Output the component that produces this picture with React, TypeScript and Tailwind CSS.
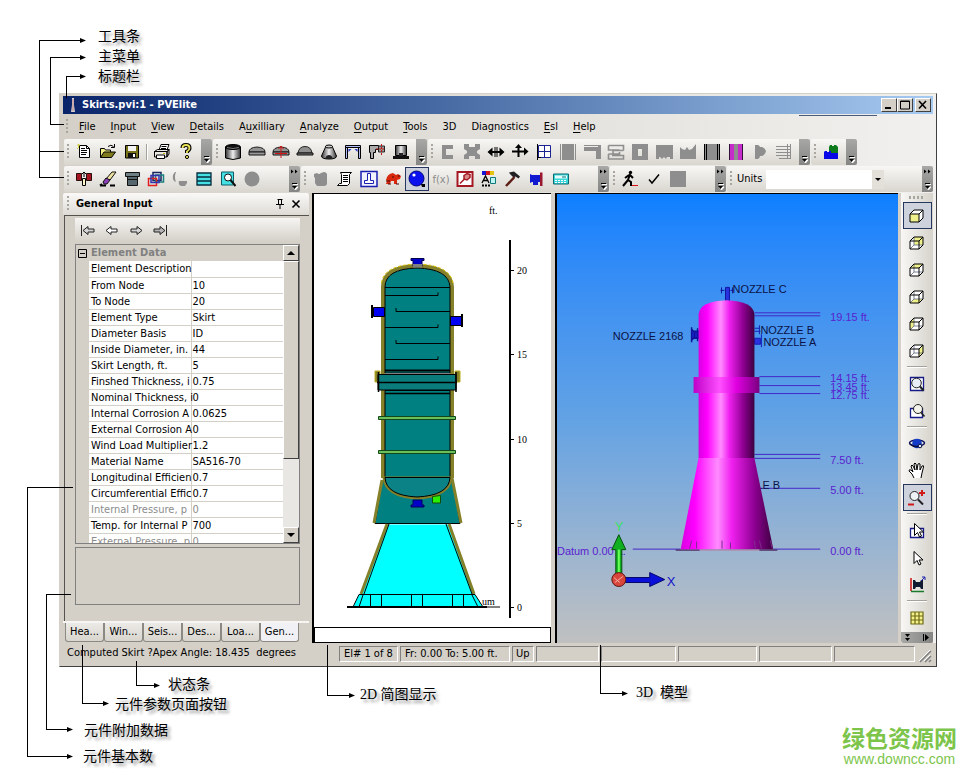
import type { ReactNode } from "react";
import { clsx } from "clsx";

interface Tool {
  name: string;
  art: ReactNode;
  active?: boolean;
}

const GREY = "#8e8e8e";

/* ---------- Toolbar icons, all drawn on a 20 x 20 grid ---------- */

const fileTools: Tool[] = [
  {
    name: "New",
    art: (
      <>
        <path d="M5.500 3.500h7l3 3v9h-10z" fill="#fff" stroke="#000" />
        <path d="M12.500 3.500v3h3M7 6.500h4M7 8.500h6M7 10.500h6M7 12.500h5" fill="none" stroke="#000" />
        <path d="M3 3h3M4.500 2v4M3 7l2-2" stroke="#d8d44a" fill="none" />
      </>
    ),
  },
  {
    name: "Open",
    art: (
      <>
        <path d="M2.500 15.500v-9h4l1 1.500h5v3" fill="#f3f08a" stroke="#000" />
        <path d="M2.500 15.500l3.500-5.500h11.500l-4 5.500z" fill="#7f7a1c" stroke="#000" />
        <path d="M10 4.500q3-2.500 5.500 0M16.500 2v3.500h-3.500" fill="none" stroke="#000" />
      </>
    ),
  },
  {
    name: "Save",
    art: (
      <>
        <path d="M3.500 3.500h13v12.500h-13z" fill="#77741c" stroke="#000" />
        <path d="M6 4h8v5H6z" fill="#f4f4f4" />
        <path d="M6 11h8v5H6z" fill="#111" />
        <path d="M11 12h2v3h-2z" fill="#fff" />
      </>
    ),
  },
];

const printTools: Tool[] = [
  {
    name: "Print",
    art: (
      <>
        <path d="M7 8l2-5.500h8l-2 5.500z" fill="#fff" stroke="#000" />
        <path d="M9.500 4.500h5M9 6.500h5" stroke="#000" />
        <path d="M2.500 9.500l3-2h11.500l-1.500 2zM2.500 9.500h12.500v5.500h-12.500zM15 9.500l2-2v4.500l-2 3z" fill="#e9e7e2" stroke="#000" />
        <path d="M4.500 13h8v3.500h-8z" fill="#fff" stroke="#000" />
        <path d="M11 11.500h2" stroke="#c9b800" />
      </>
    ),
  },
  {
    name: "Help",
    art: (
      <>
        <path d="M6.500 6q0-3 3.500-3t3.500 3q0 2-2.500 3.500v1.500" fill="none" stroke="#000" strokeWidth="4" />
        <path d="M6.500 6q0-3 3.500-3t3.500 3q0 2-2.500 3.500v1.500" fill="none" stroke="#e9e35a" strokeWidth="1.800" />
        <circle cx="11" cy="15" r="1.600" fill="#e9e35a" stroke="#000" />
      </>
    ),
  },
];

const elementTools: Tool[] = [
  {
    name: "Cylinder",
    art: (
      <>
        <path d="M2.500 5v11q7.500 3 15 0V5" fill="url(#steel)" stroke="#000" />
        <ellipse cx="10" cy="5" rx="7.500" ry="2.500" fill="#111" stroke="#000" />
        <path d="M4 5.500q6 2 12 0" stroke="#777" fill="none" />
      </>
    ),
  },
  {
    name: "Elliptical head",
    art: (
      <>
        <path d="M2 10q0-4.500 8-5 8 .500 8 5z" fill="#929292" stroke="#222" />
        <path d="M2 10h16v3H2z" fill="#9a9a9a" stroke="#111" />
      </>
    ),
  },
  {
    name: "Torispherical head",
    art: (
      <>
        <path d="M2 10q0-4.500 8-5 8 .500 8 5z" fill="#929292" stroke="#222" />
        <path d="M2 10h16v3H2z" fill="#9a9a9a" stroke="#111" />
        <path d="M10 4v12M7.500 7L10 4l2.500 3M4 11.500h12" fill="none" stroke="#d21414" />
      </>
    ),
  },
  {
    name: "Spherical head",
    art: (
      <>
        <path d="M3 11q1-6.500 7-6.500t7 6.500z" fill="#8f8f8f" stroke="#222" />
        <path d="M2 11h16v2H2z" fill="#777" stroke="#111" />
      </>
    ),
  },
  {
    name: "Cone",
    art: (
      <>
        <path d="M7 4L2.500 14q0 3 7.500 3t7.500-3L13 4z" fill="url(#steel)" stroke="#000" />
        <ellipse cx="10" cy="4.500" rx="3.500" ry="1.500" fill="#ccc" stroke="#000" />
        <path d="M6 17q1-4 4-4t4 4z" fill="#222" />
      </>
    ),
  },
  {
    name: "Welded flat head",
    art: (
      <>
        <path d="M2.500 3.500h15v2h-15zM2.500 5.500h2v11h-2zM15.500 5.500h2v11h-2z" fill="#aebcf5" stroke="#000" />
        <path d="M5.500 10V7h3zM14.500 10V7h-3z" fill="#2635c7" />
      </>
    ),
  },
  {
    name: "Body flange",
    art: (
      <>
        <path d="M2.500 3.500h9v4h-3v3h-2v6h-3v-6h-1z" fill="#aaa" stroke="#000" />
        <path d="M11.500 4h6v6h-6z" fill="#999" stroke="#222" />
        <path d="M9 7h9M14.500 2v12" stroke="#c21515" strokeDasharray="2 1" />
      </>
    ),
  },
  {
    name: "Skirt",
    art: (
      <>
        <path d="M4.500 3.500h11v10h-11z" fill="url(#steel)" stroke="#000" />
        <path d="M2 14h16v3H2z" fill="#111" />
        <path d="M8 11h4v3H8z" fill="#222" />
      </>
    ),
  },
];

const detailTools: Tool[] = [
  { name: "Ring", art: <path d="M4 3h11v4H8v6h7v4H4z" fill={GREY} /> },
  { name: "Nozzle", art: <path d="M2 2h5v3h6V2h5v5l-3 2v2l3 2v4h-5v-3H7v3H2v-4l3-2V9L2 7z" fill={GREY} /> },
  { name: "Width", art: <path d="M1.500 10l5-4.500v3.500h2V5h1v4h1V5h1v4h2V5.500l5 4.500-5 4.500V11h-2v4h-1v-4h-1v4h-1v-4h-2v3.500z" fill="#000" /> },
  { name: "Offset", art: <path d="M2 8.500h5.500V6H5L8.500 2 12 6H9.500v2.500H14V5.500l4.500 4-4.500 4v-3H9.500V15h-2v-4.500H2z" fill="#000" /> },
  {
    name: "Platform",
    art: (
      <>
        <path d="M4.500 3.500h12v12h-12z" fill="#fff" stroke="#1a2390" />
        <path d="M10.500 3.500v12M4.500 9.500h12" stroke="#1a2390" />
        <path d="M3.500 2v16M3 15.500h4" stroke="#000" />
      </>
    ),
  },
  { name: "Packing", art: <path d="M2 2h1v16H2zM4 2h12v16H4zM17 2h1v16h-1z" fill={GREY} /> },
  { name: "Saddle", art: <path d="M2 3h17v14h-5V9H2V5h14V4H2z" fill={GREY} /> },
  {
    name: "Tray",
    art: <path d="M2.500 3.500h15v5M2.500 3.500v4.500h11M17.500 8.500H7v4M2.500 12h11v-2M2.500 12v5h15v-3.500H6" stroke={GREY} strokeWidth="1.600" fill="none" />,
  },
  { name: "Lug", art: <path d="M2 2h16v16H2zM8 7v7h4V7z" fill={GREY} fillRule="evenodd" /> },
  { name: "Legs", art: <path d="M2 3h17v14h-3v-2h-3l-1 2-2-2-2 2-2-2H5v2H2z" fill={GREY} /> },
  { name: "Weight", art: <path d="M2 17V5l2 2 3 1 2-3 2 3 3-1 4-5v15z" fill={GREY} /> },
  {
    name: "Lining",
    art: (
      <>
        <path d="M2 2h16v16H2z" fill={GREY} />
        <path d="M2.500 2v16M4.500 2v16M15.500 2v16M17.500 2v16" stroke="#000" />
      </>
    ),
  },
  {
    name: "Halfpipe",
    art: (
      <>
        <path d="M3 2h14v16H3z" fill="#c62cc9" />
        <path d="M8 2h4v16H8z" fill={GREY} />
        <path d="M3.500 2v16M16.500 2v16" stroke="#33103a" />
      </>
    ),
  },
  { name: "Forces", art: <path d="M5 3h3q2 1 2 2h2q3 1 4 4-1 4-4 5h-2q0 2-2 3H5z" fill={GREY} /> },
  {
    name: "Tubes",
    art: <path d="M2 4.500h15M2 7.500h15M2 10.500h15M2 13.500h15M5 16.500h12M13.500 2v15M16.500 2v15" stroke={GREY} fill="none" />,
  },
];

const unitTools: Tool[] = [
  {
    name: "Component library",
    art: (
      <>
        <path d="M8 5l1-2h2v1h2V3h2l2 2v7H8z" fill="#0d7a1c" />
        <path d="M3 10l1-1h2v1h2V9h2v2h7v6H3z" fill="#0808e6" />
      </>
    ),
  },
];

const editTools: Tool[] = [
  {
    name: "Insert element",
    art: (
      <>
        <path d="M2.500 4.500h5v7h-5zM12.500 4.500h5v7h-5z" fill="#a61522" stroke="#2a0d0d" />
        <path d="M8.500 9.500h3v7h-3z" fill="#fdf6c9" stroke="#000" />
        <path d="M10 8V3M8 5l2-2 2 2" stroke="#000" fill="none" />
      </>
    ),
  },
  {
    name: "Erase",
    art: (
      <>
        <path d="M8 10l6-7h4l-6 8z" fill="#eee2a0" stroke="#111" />
        <path d="M5 13l3-4 4 2-3 4H6z" fill="#8a3fb5" stroke="#111" />
        <path d="M2 16.500h6M12 16.500h5M4 15l-2 1.500" stroke="#000" strokeWidth="2" />
      </>
    ),
  },
  {
    name: "Flange",
    art: (
      <>
        <path d="M3.500 3.500h14v4h-14z" fill="#6f8084" stroke="#111" />
        <path d="M5.500 7.500h10v9h-10z" fill="#56686d" stroke="#111" />
        <path d="M5 10.500h11" stroke="#111" />
      </>
    ),
  },
  {
    name: "Cascade",
    art: (
      <g fill="none" strokeWidth="1.500">
        <path d="M7 3.500h8v8H7z" stroke="#16255f" />
        <path d="M9.500 6h8v7h-8z" stroke="#1b8080" />
        <path d="M2.500 9.500h8v7h-8z" stroke="#e02020" />
        <path d="M5 6.500h8v7H5z" stroke="#3232b0" />
      </g>
    ),
  },
  { name: "Rotate", art: <path d="M5 3q-4 4-1 9l2 1q-2-5 0-10zM9 12h8v2l-2 3h-4q-3-1-2-5z" fill={GREY} /> },
  {
    name: "List",
    art: <path d="M3 4h14v12H3zM3 8h14M3 12h14" fill="#45e0e4" stroke="#072c40" strokeWidth="1.300" />,
  },
  {
    name: "Preview",
    art: (
      <>
        <path d="M3.500 3h12v13h-12z" fill="#45e0e4" stroke="#0d5c66" />
        <circle cx="10" cy="8.500" r="3.500" fill="#fff" stroke="#111" />
        <path d="M12.500 11l5 6" stroke="#111" strokeWidth="2" />
      </>
    ),
  },
  { name: "Record", art: <circle cx="10" cy="10" r="7.500" fill={GREY} /> },
];

const analysisTools: Tool[] = [
  { name: "Heat exchanger", art: <path d="M3 5l3-1q2 2 4 0l3-1q2 0 3 2v9q0 3-3 3H6l-2-3V9L3 8z" fill={GREY} /> },
  {
    name: "Report",
    art: (
      <>
        <path d="M5.500 3.500h11l-2 2v9l-2 2h-10l2-2h2v-9z" fill="#fff" stroke="#000" />
        <path d="M8 6.500h5M8 8.500h5M8 10.500h5M8 12.500h5" stroke="#000" />
      </>
    ),
  },
  {
    name: "Foundation",
    art: (
      <>
        <path d="M2 2.500h16v15H2z" fill="#f1f2ff" stroke="#1920b0" strokeWidth="1.500" />
        <path d="M8.500 4.500h3v7h3v3h-9v-3h3z" fill="#fff" stroke="#1920b0" />
      </>
    ),
  },
  {
    name: "Turtle",
    art: (
      <>
        <path d="M3 11q1-6 7-7l3 2 2-1 3 2-1 3-3 1v4h-3v-3H8l-1 3H3l1-3z" fill="#d8290f" />
        <path d="M3 12h4M9 8h2M5 15h3M13 15h3M15 7h2" stroke="#4f0b04" />
      </>
    ),
  },
  {
    name: "Sphere",
    active: true,
    art: (
      <>
        <circle cx="9.500" cy="9.500" r="7.500" fill="#0b12ee" stroke="#05077c" />
        <circle cx="7" cy="6" r="1.600" fill="#fff" />
        <path d="M14 15h4v3h-3z" fill="#000" />
      </>
    ),
  },
  {
    name: "Function",
    art: (
      <text x="10" y="14" textAnchor="middle" fill="#8a8a8a" className="text-[11px]">
        f(x)
      </text>
    ),
  },
  {
    name: "Key",
    art: (
      <>
        <path d="M2.500 3h15v14h-15z" fill="#fff" stroke="#a51822" strokeWidth="2" />
        <path d="M5 14.500l5-5M9 6.500l3-2 3 1v3l-3 2.500-3-1z" fill="#d78a8a" stroke="#a51822" strokeWidth="1.500" />
      </>
    ),
  },
  {
    name: "Colours",
    art: (
      <>
        <path d="M3 2h4v4H3z" fill="#1717cf" />
        <path d="M7 2h4v4H7z" fill="#d31515" />
        <path d="M11 2h4v4h-4z" fill="#e6c212" />
        <path d="M3 14l3.500-7L10 14M4.500 11.500h4" fill="none" stroke="#000" strokeWidth="1.300" />
        <path d="M11.500 8.500h5v6h-5z" fill="#bdf4f4" stroke="#0f7777" />
        <path d="M3 16.500h8" stroke="#000" strokeWidth="2" strokeDasharray="2 1" />
      </>
    ),
  },
  {
    name: "Hammer",
    art: (
      <>
        <path d="M6 3.500l5-1 6 5-1.500 2-3-2-2 1L7 5z" fill="#222" />
        <path d="M11.500 8L3 17" stroke="#5c1c14" strokeWidth="2.400" />
      </>
    ),
  },
  {
    name: "Valve",
    art: (
      <>
        <path d="M3 5l2 1h8v7H5l-2 1z" fill="#1019cf" />
        <path d="M6 13h5v3H6z" fill="#1019cf" />
        <path d="M13 3.500h2.500v13.500H13z" fill="#9a1730" />
      </>
    ),
  },
  {
    name: "Calculator",
    art: (
      <>
        <path d="M2.500 5h15v10h-15z" fill="#39d6da" stroke="#0a6a70" />
        <path d="M4 6.500h12v3H4z" fill="#e8ffff" />
        <path d="M4 11.500h12M4 13.500h12" stroke="#fff" strokeDasharray="2 1" />
        <path d="M12 7v2M14 7v2" stroke="#0a6a70" />
      </>
    ),
  },
];

const runTools: Tool[] = [
  {
    name: "Run",
    art: (
      <>
        <circle cx="10.500" cy="3.500" r="1.700" fill="#000" />
        <path d="M10 5L8 11l3 2v4M8 11l-5 6M9 6L5 9M10 6l3 3" stroke="#000" strokeWidth="2" fill="none" />
        <path d="M12 16.500h6" stroke="#d11" />
      </>
    ),
  },
  { name: "Check", art: <path d="M5 10.500L8 14l7-8.500" fill="none" stroke="#000" strokeWidth="1.500" /> },
  { name: "Stop", art: <path d="M2 2h16v16H2z" fill={GREY} /> },
];

const cubeFaces = {
  front: "M3 8h9v8H3z",
  back: "M7 4h9v8H7z",
  top: "M3 8l4-4h9l-4 4z",
  bottom: "M3 16l4-4h9l-4 4z",
  left: "M3 8l4-4v8l-4 4z",
  right: "M12 8l4-4v8l-4 4z",
};

function Cube({ face }: { face: keyof typeof cubeFaces }) {
  return (
    <>
      <path d="M3 8l4-4h9v8l-4 4H3z" fill="#fff" />
      <path d={cubeFaces[face]} fill="#eef08c" />
      {face !== "front" && <path d="M7 4v8h9M7 12l-4 4" fill="none" stroke="#5a6478" strokeWidth=".800" />}
      <path d="M3 8l4-4h9v8l-4 4H3zM3 8h9v8M12 8l4-4" fill="none" stroke="#000" />
    </>
  );
}

const viewTools: Tool[][] = [
  [
    { name: "Front view", active: true, art: <Cube face="front" /> },
    { name: "Back view", art: <Cube face="back" /> },
    { name: "Top view", art: <Cube face="top" /> },
    { name: "Bottom view", art: <Cube face="bottom" /> },
    { name: "Left view", art: <Cube face="left" /> },
    { name: "Right view", art: <Cube face="right" /> },
  ],
  [
    {
      name: "Zoom extents",
      art: (
        <>
          <path d="M3.500 3.500h13v13h-13z" fill="#fff" stroke="#171b88" strokeWidth="1.300" />
          <circle cx="9.500" cy="9" r="4.800" fill="#e8eef6" stroke="#222" />
          <path d="M13 12.500l3.500 4" stroke="#222" strokeWidth="2" />
        </>
      ),
    },
    {
      name: "Zoom window",
      art: (
        <>
          <path d="M3.500 7.500h12v9h-12z" fill="#fff" stroke="#171b88" strokeWidth="1.300" />
          <circle cx="11" cy="8" r="4.500" fill="#f3f3ea" stroke="#222" />
          <path d="M14 11.500l3.500 4" stroke="#222" strokeWidth="1.600" />
        </>
      ),
    },
  ],
  [
    {
      name: "Orbit",
      art: (
        <>
          <ellipse cx="10" cy="9" rx="7.500" ry="3" fill="none" stroke="#0a0f5c" strokeWidth="1.500" />
          <circle cx="10" cy="9.500" r="4.800" fill="#143cc8" />
          <path d="M3 10q3 3 8 2.500" fill="none" stroke="#0a0f3c" strokeWidth="1.500" />
          <circle cx="13" cy="12" r="1.800" fill="#dfe8ff" stroke="#0a0f3c" />
        </>
      ),
    },
    {
      name: "Pan",
      art: (
        <path
          d="M7 17l-2-4-3-3q0-2 2-1l2 2-2-6q1-2 2 0l2 4-1-6q1-2 2 0l1 6 1-6q1-1 2 0l0 6 2-4q2-1 1.500 1L15 12l-1 5"
          fill="#fff"
          stroke="#000"
        />
      ),
    },
    {
      name: "Zoom",
      active: true,
      art: (
        <>
          <circle cx="7.500" cy="8" r="4.500" fill="#eef1f5" stroke="#222" />
          <path d="M11 11.500l5 5" stroke="#222" strokeWidth="2" />
          <path d="M12 5h6M15 2v6M1 16.500h6" stroke="#d11a1a" strokeWidth="2" />
        </>
      ),
    },
  ],
  [
    {
      name: "Select window",
      art: (
        <>
          <path d="M3.500 7.500h13v9h-13z" fill="#fff" stroke="#171b88" strokeWidth="1.300" />
          <path d="M7.500 2.500v12l3-3 2 4.500 2-1-2-4h4z" fill="#fff" stroke="#000" />
        </>
      ),
    },
    { name: "Select", art: <path d="M7 3.500v12l3-3 2 4.500 2-1-2-4h4z" fill="#fff" stroke="#000" /> },
    {
      name: "Axes",
      art: (
        <>
          <path d="M6 5h2l1 2h4l1-2h2v9h-2l-1-2H9l-1 2H6z" fill="#111a30" />
          <path d="M4 3v13" stroke="#c11" strokeWidth="1.500" />
          <path d="M4 16.500h13" stroke="#187a2a" strokeWidth="1.500" />
          <path d="M14 6l4-4M15 2h3v3" stroke="#1a22b0" fill="none" />
        </>
      ),
    },
  ],
  [
    {
      name: "Grid",
      art: <path d="M4 4h12v12H4zM8 4v12M12 4v12M4 8h12M4 12h12" fill="#f3f18b" stroke="#6e6a18" strokeWidth="1.200" />,
    },
  ],
];

const navTools: Tool[] = [
  { name: "First", art: <path d="M3.500 5v11M5 10.500l5-4v2.500h6v3h-6v2.500z" fill="#d4d4d4" stroke="#222" /> },
  { name: "Previous", art: <path d="M4 10.500l5-4v2.500h6v3H9v2.500z" fill="#fff" stroke="#222" /> },
  { name: "Next", art: <path d="M16 10.500l-5-4v2.500H5v3h6v2.500z" fill="#d4d4d4" stroke="#222" /> },
  { name: "Last", art: <path d="M16.500 5v11M15 10.500l-5-4v2.500H4v3h6v2.500z" fill="#b4b4b4" stroke="#222" /> },
];

/* ---------- Data ---------- */

const menus = [
  ["File", 0], ["Input", 0], ["View", 0], ["Details", 0], ["Auxilliary", 1], ["Analyze", 0],
  ["Output", 0], ["Tools", 0], ["3D", -1], ["Diagnostics", -1], ["Esl", 0], ["Help", 0],
] as const;

const properties = [
  { label: "Element Description", value: "" },
  { label: "From Node", value: "10" },
  { label: "To Node", value: "20" },
  { label: "Element Type", value: "Skirt" },
  { label: "Diameter Basis", value: "ID" },
  { label: "Inside Diameter, in.", value: "44" },
  { label: "Skirt Length, ft.", value: "5" },
  { label: "Finshed Thickness, i", value: "0.75" },
  { label: "Nominal Thickness, i", value: "0" },
  { label: "Internal Corrosion A", value: "0.0625" },
  { label: "External Corrosion A", value: "0" },
  { label: "Wind Load Multiplier", value: "1.2" },
  { label: "Material Name", value: "SA516-70" },
  { label: "Longitudinal Efficien", value: "0.7" },
  { label: "Circumferential Effic", value: "0.7" },
  { label: "Internal Pressure, p", value: "0", disabled: true },
  { label: "Temp. for Internal P", value: "700" },
  { label: "External Pressure, p", value: "0", disabled: true },
];

const tabs = ["Hea...", "Win...", "Seis...", "Des...", "Loa...", "Gen..."];

/* ---------- Small parts ---------- */

function ToolButton({ tool }: { tool: Tool }) {
  return (
    <button
      type="button"
      aria-label={tool.name}
      className={clsx(
        "flex h-6 w-6 shrink-0 items-center justify-center",
        tool.active && "border border-[#26375f] bg-[#cdd2dd]"
      )}
    >
      <svg viewBox="0 0 20 20" className="h-5 w-5 shrink-0">{tool.art}</svg>
    </button>
  );
}

function Grip() {
  return <span className="mx-[3px] h-4 w-[2px] shrink-0 bg-[repeating-linear-gradient(#a9a69f_0_2px,transparent_2px_4px)]" />;
}

function Cap({ more }: { more?: boolean }) {
  return (
    <button type="button" aria-label="Toolbar options" className="ml-auto h-[26px] w-[11px] shrink-0 rounded-r-[2px] bg-linear-to-b from-[#a8a8a6] to-[#858583]">
      <svg viewBox="0 0 11 26" className="h-[26px] w-[11px]">
        {more && <path d="M2 3.500L4.500 5.500 2 7.500zM6 3.500l2.500 2L6 7.500z" fill="#000" />}
        <path d="M4 18.500h5M4 21h5l-2.500 3z" fill="#fff" stroke="#fff" />
        <path d="M3 17.500h5" stroke="#000" />
        <path d="M3 20h5l-2.500 3z" fill="#000" />
      </svg>
    </button>
  );
}

function Toolbar({ children, more, className }: { children: ReactNode; more?: boolean; className?: string }) {
  return (
    <div className={clsx("flex h-[26px] items-center rounded-[2px] bg-linear-to-b from-[#f8f7f5] to-[#d9d6cf]", className)}>
      <Grip />
      {children}
      <span className="w-[3px] shrink-0" />
      <Cap more={more} />
    </div>
  );
}

function Tools({ items }: { items: Tool[] }) {
  return items.map((tool) => <ToolButton key={tool.name} tool={tool} />);
}

function Callout({ children, className }: { children: ReactNode; className?: string }) {
  return (
    <p className={clsx("text-[14px]/5 whitespace-nowrap [text-shadow:3px_3px_3px_#999] font-['Liberation_Serif','Noto_Sans_CJK_SC',sans-serif]", className)}>
      {children}
    </p>
  );
}

/* Leader lines that tie each callout to its part of the window */
function Leaders() {
  const tips = [
    [86, 40], [86, 57], [86, 76], [160, 685], [109, 703], [73, 729], [73, 756], [355, 695], [628, 693],
  ];
  return (
    <svg viewBox="0 0 977 778" className="pointer-events-none absolute top-0 left-0 h-[778px] w-[977px]">
      <path
        fill="none"
        stroke="#000"
        shapeRendering="crispEdges"
        d="M85 40.500H39.500V177.500H64M39.500 151.500H64M85 57.500H50.500V124.500H64M85 76.500H66.500V98M73 487.500H27.500V756.500H70M71 594.500H46.500V729.500H70M82.500 645V703.500H106M136.500 661V685.500H157M327.500 645V695.500H352M600.500 645V693.500H625"
      />
      {tips.map(([x, y]) => (
        <path key={`${x}-${y}`} d={`M${x} ${y + 0.5}l-6-2.500v5z`} />
      ))}
    </svg>
  );
}

/* ---------- Window sections ---------- */

function TitleBar() {
  const button = "flex h-[14px] w-4 items-center justify-center border border-t-white border-l-white border-r-[#404040] border-b-[#404040] bg-[#d4d0c8]";
  return (
    <header className="flex h-[18px] items-center bg-linear-to-r from-[#0a246a] to-[#a6caf0] pr-[2px] pl-1">
      <svg viewBox="0 0 12 16" className="h-4 w-3">
        <path d="M5 1h2v7l1 7H4l1-7z" fill="#d5d0d4" />
        <path d="M6 2v12" stroke="#b88" />
      </svg>
      <h1 className="ml-[3px] text-[11px] font-bold text-white">Skirts.pvi:1 - PVElite</h1>
      <div className="ml-auto flex">
        <button type="button" aria-label="Minimize" className={button}>
          <svg viewBox="0 0 12 10" className="h-[10px] w-3"><path d="M2 7h6v2H2z" /></svg>
        </button>
        <button type="button" aria-label="Maximize" className={button}>
          <svg viewBox="0 0 12 10" className="h-[10px] w-3"><path d="M1.500 1h9v8h-9zM1 1.500h10" fill="none" stroke="#000" /></svg>
        </button>
        <button type="button" aria-label="Close" className={clsx(button, "ml-[2px]")}>
          <svg viewBox="0 0 12 10" className="h-[10px] w-3"><path d="M2 1l7 7.500M9 1L2 8.500" stroke="#000" strokeWidth="1.600" /></svg>
        </button>
      </div>
    </header>
  );
}

function MenuBar() {
  return (
    <nav className="flex h-[25px] items-center gap-px pt-px">
      <Grip />
      {menus.map(([label, key]) => (
        <button key={label} type="button" className="px-[7px]">
          {key < 0 ? label : (
            <>
              {label.slice(0, key)}
              <span className="underline underline-offset-2">{label[key]}</span>
              {label.slice(key + 1)}
            </>
          )}
        </button>
      ))}
      <span className="mr-14 ml-auto w-[78px] self-start border-t border-[#4a5b7c]" />
    </nav>
  );
}

function Toolbars() {
  return (
    <div className="flex flex-col gap-px pl-px">
      <div className="flex gap-px">
        <Toolbar>
          <Tools items={fileTools} />
          <span className="mx-[2px] h-4 w-[2px] border-l border-[#a5a29b] bg-white" />
          <Tools items={printTools} />
        </Toolbar>
        <Toolbar><Tools items={elementTools} /></Toolbar>
        <Toolbar><Tools items={detailTools} /></Toolbar>
        <Toolbar><Tools items={unitTools} /></Toolbar>
      </div>
      <div className="flex gap-px">
        <Toolbar more className="w-[236px] shrink-0"><Tools items={editTools} /></Toolbar>
        <Toolbar more className="w-[308px] shrink-0"><Tools items={analysisTools} /></Toolbar>
        <Toolbar more className="w-[116px] shrink-0"><Tools items={runTools} /></Toolbar>
        <Toolbar more className="grow">
          <label htmlFor="units" className="mx-[2px]">Units</label>
          <div className="relative ml-[2px] w-[118px]">
            <select id="units" className="h-[19px] w-full appearance-none bg-white" />
            <svg viewBox="0 0 12 19" className="pointer-events-none absolute top-0 right-0 h-[19px] w-3 bg-[#e3e0da]">
              <path d="M3 8h6l-3 3z" />
            </svg>
          </div>
        </Toolbar>
      </div>
    </div>
  );
}

function ScrollButton({ name, d }: { name: string; d: string }) {
  return (
    <button type="button" aria-label={name} className="flex h-4 w-4 items-center justify-center border border-t-white border-l-white border-r-[#404040] border-b-[#404040] bg-[#d4d0c8]">
      <svg viewBox="0 0 8 8" className="h-2 w-2"><path d={d} /></svg>
    </button>
  );
}

function PropertyGrid() {
  return (
    <div className="flex h-[300px] border border-[#808080]">
      <div className="min-w-0 flex-1 overflow-hidden">
        <h3 className="flex h-4 items-center gap-1 pl-[2px] font-bold text-[#808080]">
          <svg viewBox="0 0 9 9" className="h-[9px] w-[9px]">
            <path d="M.500 .500h8v8h-8zM2 4.500h5" fill="none" stroke="#000" />
          </svg>
          Element Data
        </h3>
        <table className="ml-[13px] w-[194px] table-fixed border-collapse bg-white leading-[15px]">
          <tbody>
            {properties.map(({ label, value, disabled }) => (
              <tr key={label} className={clsx("h-4 border-b border-[#d4d0c8]", disabled && "text-[#8c8c8c]")}>
                <th scope="row" className="w-[102px] border-r border-[#d4d0c8] p-0 pl-[2px] text-left font-normal whitespace-nowrap">{label}</th>
                <td className="p-0 pl-px">{value}</td>
              </tr>
            ))}
          </tbody>
        </table>
      </div>
      <div className="flex w-4 flex-col bg-[#e9e7e3]">
        <ScrollButton name="Scroll up" d="M0 6h8L4 2z" />
        <div className="h-[198px] border border-t-white border-l-white border-r-[#404040] border-b-[#404040] bg-[#d4d0c8]" />
        <div className="mt-auto"><ScrollButton name="Scroll down" d="M0 2h8L4 6z" /></div>
      </div>
    </div>
  );
}

function InputPanel() {
  return (
    <aside className="flex w-[246px] shrink-0 flex-col">
      <div className="flex h-[22px] items-center rounded-t-[2px] bg-linear-to-b from-[#faf9f8] to-[#dedbd5] pl-px">
        <Grip />
        <h2 className="ml-1 text-[11px] font-bold">General Input</h2>
        <button type="button" aria-label="Pin" className="ml-auto">
          <svg viewBox="0 0 10 10" className="h-[10px] w-[10px]">
            <path d="M3.500 1v4M6.500 1v4M2.500 .500h5M1 5.500h8M5 6v4" fill="none" stroke="#000" />
          </svg>
        </button>
        <button type="button" aria-label="Close panel" className="mr-2 ml-[6px]">
          <svg viewBox="0 0 10 10" className="h-[10px] w-[10px]">
            <path d="M1.500 1.500l7 7M8.500 1.500l-7 7" stroke="#000" strokeWidth="1.600" />
          </svg>
        </button>
      </div>
      <div className="ml-px flex grow flex-col border-t border-l border-[#55524d] pr-[9px] pl-[10px]">
        <div className="mt-[2px] mb-[2px] flex h-6 items-center bg-linear-to-b from-[#f6f5f3] to-[#d4d0c8] pl-px">
          <Tools items={navTools} />
        </div>
        <PropertyGrid />
        <div className="mt-[3px] h-[58px] border border-[#808080]" />
      </div>
      <div role="tablist" className="flex h-[22px] border-t-2 border-[#f6f5f3] bg-[#d4d0c8] pl-[2px]">
        {tabs.map((tab) => (
          <button
            key={tab}
            type="button"
            role="tab"
            aria-selected={tab === "Gen..."}
            className={clsx(
              "h-[19px] w-[39px] rounded-b-[3px] border border-t-0 border-[#8c8982] text-[11px]",
              tab === "Gen..." ? "bg-[#f1f0f4]" : "bg-linear-to-b from-[#eceae6] to-[#d8d5ce]"
            )}
          >
            {tab}
          </button>
        ))}
      </div>
    </aside>
  );
}

function Sketch2D() {
  const scale: [string, number][] = [["20", 270], ["15", 354], ["10", 439], ["5", 523], ["0", 607]];
  return (
    <section className="ml-[3px] flex w-[239px] shrink-0 flex-col border-t border-l-2 border-black bg-white">
      <svg viewBox="314 194 237 432" className="h-[432px] w-full" fill="none" stroke="#000">
        {/* insulation */}
        <path d="M383 478V287q0-20 34-21 34 1 35 21v191" stroke="#85802a" strokeWidth="4" />
        <path d="M381.500 283q2-18 35.500-19 34 1 36 20" stroke="#dcc400" strokeDasharray="3 2" />
        <path d="M375 371h5v11h-5zM455 371h5v11h-5z" fill="#85802a" stroke="#b9ac1c" />
        {/* shell */}
        <path d="M385 373V287q0-18 32-19 32 1 33 19v86z" fill="#008080" />
        <path d="M385 287.500h65M385 295.500h53v-3M396 308v3.500h54M385 327.500h53v-3M396 340v3.500h54M385 359.500h53v-3" />
        <path d="M385 370.500h65" strokeWidth="2" />
        <path d="M385 390.500h65v87h-65z" fill="#008080" />
        <path d="M378 374.500h78v15.500h-78z" fill="#0b7c7c" />
        <path d="M377 382.500h80M378.500 372v20M456 372v20M385 393.500h65" strokeWidth="1.500" />
        {/* upper skirt and bottom head */}
        <path d="M382 481l-7 42.500h85l-7-42.500z" fill="#008080" />
        <path d="M382 480l-8 43M452 478l9 45" stroke="#85802a" strokeWidth="3" />
        <path d="M384 478q2 18 33 20 32-2 34-20z" fill="#0b8286" stroke="#85802a" strokeWidth="3" />
        <path d="M385 477.500h65q-1 18-33 19.500-31-1.500-32-19.500z" fill="#0b8286" />
        <path d="M413 500h9v5h2v2h-13v-2h2z" fill="#0000c8" stroke="#00005c" />
        <path d="M432.500 496.500l8-1v7.500h-8z" fill="#28f000" stroke="#124d08" />
        {/* stiffening rings */}
        <path d="M378.500 416.500h77v3h-77zM378.500 450.500h77v3h-77z" fill="#6abf5a" stroke="#10481b" />
        {/* lower skirt */}
        <path d="M388 524.500l-27 70h114l-27-70z" fill="#00ffff" stroke="none" />
        <path d="M387 524l-26 70M449 524l25 70" stroke="#85802a" strokeWidth="3" />
        <path d="M389 524l-25 70M446 524l26 70" />
        <path d="M359 594.500h116l8 12.500H353z" fill="#00ffff" />
        <path d="M363 595l-4 12M370.500 595v12M381.500 595v12M411.500 595v12M422.500 595v12M452.500 595v12M463.500 595v12M472 595l6 12M480 607h20" />
        <path d="M347 607h140" strokeWidth="2" />
        {/* nozzles */}
        <path d="M411 258.500h13v2h-2v6h-9v-6h-2z" fill="#0000c8" stroke="#00004c" />
        <path d="M413 264h9v3.500h-9z" fill="#808080" stroke="none" />
        <path d="M373.500 307.500h11v9h-11zM450.500 316.500h11v9h-11z" fill="#0000f0" />
        <path d="M372 305v13M462 314v13" strokeWidth="2" />
        {/* scale */}
        <path d="M510 240v378" strokeWidth="2" />
        {scale.map(([label, y]) => <path key={label} d={`M510 ${y + 0.5}h4`} />)}
        <g fill="#000" stroke="none" className="font-['Liberation_Serif',serif] text-[10px]">
          {scale.map(([label, y]) => <text key={label} x="517" y={y + 4}>{label}</text>)}
          <text x="489" y="214">ft.</text>
          <text x="482" y="605">um</text>
        </g>
      </svg>
      <div className="mt-px h-4 border border-black" />
    </section>
  );
}

function Model3D() {
  const levels: [string, number][] = [
    ["19.15 ft.", 321], ["14.15 ft.", 382], ["13.45 ft.", 391], ["12.75 ft.", 399],
    ["7.50 ft.", 464], ["5.00 ft.", 494], ["0.00 ft.", 555],
  ];
  return (
    <section className="ml-1 min-w-0 grow border-t border-l-2 border-black bg-linear-to-b from-[#0b7fff] via-[#62a2e4] to-[#c0c0c0]">
      <svg viewBox="557 194 342 449" className="h-[449px] w-full" fill="none">
        <path
          stroke="#4527c8"
          d="M755 312.500h66M755 315.500h66M760 376.500h61M760 385.500h61M760 393.500h61M755 454.500h66M755 458.500h66M760 488.500h61M774 549.500h47M633 549.500h48"
        />
        <g fill="#5a22cf" className="font-['Liberation_Sans',sans-serif] text-[11px]">
          {levels.map(([label, y]) => <text key={label} x="831" y={y}>{label}</text>)}
          <text x="557" y="555">Datum 0.00 ft.</text>
        </g>
        <g fill="#0a1247" className="font-['Liberation_Sans',sans-serif] text-[11px]">
          <text x="733" y="293">NOZZLE C</text>
          <text x="761" y="334">NOZZLE B</text>
          <text x="764" y="346">NOZZLE A</text>
          <text x="613" y="340">NOZZLE 2168</text>
          <text x="757" y="489">LE B</text>
        </g>
        {/* nozzles */}
        <path d="M726 287h4v15h-4zM721 290h4M731 290h3M722 287v6M733 287v6" fill="#2a32e0" stroke="#1018a0" />
        <path d="M692 327v15M692 329l3 3v5l-3 3M698 328v13M695 331h5v7h-5z" fill="#1a22cc" stroke="#0d1499" strokeWidth="1.500" />
        <path d="M755 328h5M755 331h6M760 325v9M755 338h6v6h-6zM762 334v13" fill="#2a32e0" stroke="#1520b8" />
        {/* vessel */}
        <path d="M699 458V314q1-13 28-14 27 1 28 14v144z" fill="url(#magenta)" />
        <path d="M699 458h56l19 92h-93z" fill="url(#magenta)" />
        <path d="M694 377h66v16h-66z" fill="url(#flange)" />
        <path d="M676 550.500h102" stroke="#3b1044" />
        <path d="M700 550.500h60" stroke="#d9c7dc" />
        <path d="M690 549l2-8M697 549v-7M722.500 549v-8M731 549v-6M756 549l-1-8M762 549l-2-8M773 549l-2-8" stroke="#7c2b8c" />
        {/* axis triad */}
        <path d="M616 576v-26h-4l7-15 7 15h-4v26z" fill="#10b020" stroke="#064f0e" />
        <path d="M619 574v-24" stroke="#6cff5a" strokeWidth="2" />
        <path d="M624 578h26v-5l15 7-15 7v-4h-26z" fill="#0a10d8" stroke="#04066a" />
        <circle cx="619" cy="580" r="7" fill="#d8453a" stroke="#5c1511" />
        <path d="M615 583l8-6M614 578l6 5" stroke="#f6b0a8" />
        <g className="font-['Liberation_Sans',sans-serif] text-[13px]">
          <text x="615" y="531" fill="#38e060">Y</text>
          <text x="667" y="586" fill="#1212c8">X</text>
        </g>
      </svg>
    </section>
  );
}

function ViewToolbar() {
  return (
    <div className="ml-[3px] flex w-[32px] shrink-0 flex-col items-center bg-linear-to-r from-[#f8f7f5] to-[#d6d3cb]">
      <span className="my-[3px] h-[3px] w-4 bg-[repeating-linear-gradient(90deg,#a9a69f_0_2px,transparent_2px_4px)]" />
      {viewTools.map((group, i) => (
        <div key={i} className="flex flex-col items-center">
          {i > 0 && <span className="my-[2px] h-[2px] w-5 border-t border-[#a5a29b] bg-white" />}
          {group.map((tool) => (
            <button
              key={tool.name}
              type="button"
              aria-label={tool.name}
              className={clsx(
                "flex h-[27px] w-[29px] items-center justify-center",
                tool.active && "border border-[#26375f] bg-[#cdd2dd]"
              )}
            >
              <svg viewBox="0 0 20 20" className="h-5 w-5">{tool.art}</svg>
            </button>
          ))}
        </div>
      ))}
      <button type="button" aria-label="Toolbar options" className="mt-auto h-[11px] w-full rounded-b-[2px] bg-linear-to-r from-[#a8a8a6] to-[#858583]">
        <svg viewBox="0 0 32 11" className="h-[11px] w-full">
          <path d="M4 2h5l-2.500 3zM4 6h5l-2.500 3zM22 2h1v7h-1zM24 2l4 3.500-4 3.500z" />
        </svg>
      </button>
    </div>
  );
}

function StatusBar() {
  const cell = "h-4 shrink-0 border border-t-[#808080] border-l-[#808080] border-r-white border-b-white px-1 leading-[14px] whitespace-pre";
  return (
    <footer className="flex h-[21px] items-center gap-[2px] pl-1">
      <p className="w-[270px] shrink-0 whitespace-pre">Computed Skirt ?Apex Angle: 18.435  degrees</p>
      <p className={clsx(cell, "w-[59px]")}>El# 1 of 8</p>
      <p className={clsx(cell, "w-[110px]")}>Fr: 0.00 To: 5.00 ft.</p>
      <p className={clsx(cell, "w-[22px] px-[3px]")}>Up</p>
      <p className={clsx(cell, "w-[63px]")} />
      <p className={clsx(cell, "w-[75px]")} />
      <p className={clsx(cell, "w-[79px]")} />
      <p className={clsx(cell, "w-[73px]")} />
      <p className={clsx(cell, "grow")} />
      <svg viewBox="0 0 16 16" className="h-4 w-4 shrink-0 self-end" fill="none">
        <path d="M3 14L14 3M8 14l6-6M12 14l2-2" stroke="#808080" strokeWidth="1.500" />
        <path d="M2 13L13 2M7 13l6-6" stroke="#fff" />
      </svg>
    </footer>
  );
}

export default function App() {
  return (
    <main className="relative min-h-screen bg-white text-[11px] text-black font-['DejaVu_Sans_Condensed','DejaVu_Sans',sans-serif]">
      {/* shared gradients */}
      <svg className="absolute h-0 w-0" aria-hidden="true">
        <defs>
          <linearGradient id="steel">
            <stop offset="0" stopColor="#333" />
            <stop offset=".500" stopColor="#eee" />
            <stop offset="1" stopColor="#333" />
          </linearGradient>
          <linearGradient id="magenta">
            <stop offset="0" stopColor="#d800e0" />
            <stop offset=".150" stopColor="#ff00ff" />
            <stop offset=".400" stopColor="#ff8cff" />
            <stop offset=".550" stopColor="#f020f0" />
            <stop offset=".800" stopColor="#8c0090" />
            <stop offset="1" stopColor="#3c0040" />
          </linearGradient>
          <linearGradient id="flange">
            <stop offset="0" stopColor="#c000c8" />
            <stop offset=".400" stopColor="#ff50ff" />
            <stop offset=".650" stopColor="#e000e0" />
            <stop offset="1" stopColor="#7a0080" />
          </linearGradient>
        </defs>
      </svg>

      <div className="flex h-[93px] flex-col pt-[27px] pl-[98px]">
        <Callout>工具条</Callout>
        <Callout>主菜单</Callout>
        <Callout>标题栏</Callout>
      </div>

      <div className="mr-10 ml-[59px] border border-t-[#d4d0c8] border-l-[#d4d0c8] border-r-[#404040] border-b-[#404040] bg-linear-to-r from-[#d4d0c8] to-[#f1f0ee] px-[3px] pt-[2px] pb-[2px]">
        <TitleBar />
        <MenuBar />
        <Toolbars />
        <div className="mt-px flex bg-[#d4d0c8]">
          <InputPanel />
          <Sketch2D />
          <Model3D />
          <ViewToolbar />
        </div>
        <div className="-mx-[3px] -mb-[2px] bg-[#d4d0c8] px-[3px] pb-[2px]">
          <StatusBar />
        </div>
      </div>

      <div className="flex items-start">
        <div className="flex w-[360px] shrink-0 flex-col pt-2">
          <Callout className="pl-[168px]">状态条</Callout>
          <Callout className="pl-[115px]">元件参数页面按钮</Callout>
          <Callout className="pt-[6px] pl-[84px]">元件附加数据</Callout>
          <Callout className="pt-[6px] pl-[83px]">元件基本数</Callout>
        </div>
        <Callout className="w-[276px] shrink-0 pt-[18px]">2D 简图显示</Callout>
        <Callout className="pt-4">3D&nbsp; 模型</Callout>
        <div className="mr-5 ml-auto pt-[56px] text-center text-[#7cc54a]">
          <p className="text-[23px]/7 font-bold font-['Noto_Sans_CJK_SC',sans-serif]">绿色资源网</p>
          <p className="text-[14px]/4 font-['Liberation_Sans',sans-serif]">www.downcc.com</p>
        </div>
      </div>

      <Leaders />
    </main>
  );
}
